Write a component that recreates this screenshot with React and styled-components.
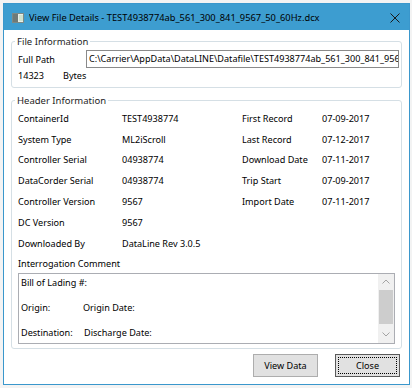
import React from "react"
import styled, { createGlobalStyle } from "styled-components"

const GlobalStyle = createGlobalStyle`
  html, body {
    margin: 0;
    padding: 0;
    background: #f3f3f3;
  }
  body {
    font-family: "Noto Sans", "Open Sans", sans-serif;
    font-size: 9.1px;
    color: #000;
  }
`

const headerLeft = [
  ["ContainerId", "TEST4938774"],
  ["System Type", "ML2iScroll"],
  ["Controller Serial", "04938774"],
  ["DataCorder Serial", "04938774"],
  ["Controller Version", "9567"],
  ["DC Version", "9567"],
  ["Downloaded By", "DataLine Rev 3.0.5"],
]

const headerRight = [
  ["First Record", "07-09-2017"],
  ["Last Record", "07-12-2017"],
  ["Download Date", "07-11-2017"],
  ["Trip Start", "07-09-2017"],
  ["Import Date", "07-11-2017"],
]

function AppIcon() {
  return (
    <IconWrap>
      <svg width="12" height="10" viewBox="0 0 12 10">
        <rect x="0.5" y="0.5" width="11" height="9" fill="#e9eee9" stroke="#7d8a86" />
        <rect x="1" y="1" width="5" height="8" fill="#6f7a77" />
        <rect x="7" y="2" width="4" height="6" fill="#cfe3cf" />
      </svg>
    </IconWrap>
  )
}

function CloseGlyph() {
  return (
    <svg width="10" height="10" viewBox="0 0 10 10">
      <path d="M0.5 0.5 L9.5 9.5 M9.5 0.5 L0.5 9.5" stroke="#1a1a1a" strokeWidth="1" fill="none" />
    </svg>
  )
}

function Arrow({ up }) {
  return (
    <svg width="8" height="5" viewBox="0 0 8 5">
      <path d={up ? "M0.5 4.5 L4 1 L7.5 4.5" : "M0.5 0.5 L4 4 L7.5 0.5"} stroke="#a3a3a3" fill="none" />
    </svg>
  )
}

export default function App() {
  return (
    <>
      <GlobalStyle />
      <Window>
        <TitleBar>
          <AppIcon />
          <Title>View File Details - TEST4938774ab_561_300_841_9567_50_60Hz.dcx</Title>
          <CloseBox><CloseGlyph /></CloseBox>
        </TitleBar>
        <Body>
          <GroupBox>
            <Legend>File Information</Legend>
            <PathRow>
              <PathLabel>Full Path</PathLabel>
              <PathBox>C:\Carrier\AppData\DataLINE\Datafile\TEST4938774ab_561_300_841_9567_50_60Hz.dcx</PathBox>
            </PathRow>
            <BytesRow>
              <BytesValue>14323</BytesValue>
              <span>Bytes</span>
            </BytesRow>
          </GroupBox>

          <GroupBox $gap>
            <Legend>Header Information</Legend>
            <InfoGrid>
              {headerLeft.map(([label, value], i) => (
                <React.Fragment key={label}>
                  <Cell>{label}</Cell>
                  <Cell>{value}</Cell>
                  <Cell>{headerRight[i] ? headerRight[i][0] : ""}</Cell>
                  <Cell>{headerRight[i] ? headerRight[i][1] : ""}</Cell>
                </React.Fragment>
              ))}
            </InfoGrid>
            <CommentLabel>Interrogation Comment</CommentLabel>
            <CommentBox>
              <CommentText>
                <Line>Bill of Lading #:</Line>
                <Line><Tab $w={62}>Origin:</Tab>Origin Date:</Line>
                <Line><Tab $w={63}>Destination:</Tab>Discharge Date:</Line>
              </CommentText>
              <ScrollBar>
                <ScrollButton><Arrow up /></ScrollButton>
                <Track><Thumb /></Track>
                <ScrollButton><Arrow /></ScrollButton>
              </ScrollBar>
            </CommentBox>
          </GroupBox>

          <Buttons>
            <Button>View Data</Button>
            <Button $default><Focus>Close</Focus></Button>
          </Buttons>
        </Body>
      </Window>
    </>
  )
}

const Window = styled.div`
  margin: 3px 0 0 3px;
  width: 405px;
  height: 380px;
  border: 1px solid #3a97cc;
  background: #ffffff;
  display: flex;
  flex-direction: column;
`

const TitleBar = styled.div`
  height: 26px;
  background: #3d9dd0;
  display: flex;
  align-items: center;
  padding: 0 9px 0 8px;
  gap: 5px;
`

const IconWrap = styled.div`
  flex-shrink: 0;
  display: flex;
  padding-top: 1px;
`

const Title = styled.div`
  flex: 1;
  font-size: 9.3px;
  color: #000;
  white-space: nowrap;
  overflow: hidden;
`

const CloseBox = styled.div`
  flex-shrink: 0;
  display: flex;
  align-items: center;
  padding-top: 1px;
`

const Body = styled.div`
  flex: 1;
  display: flex;
  flex-direction: column;
  padding: 4px 7px 0 7px;
`

const GroupBox = styled.fieldset`
  margin: ${p => (p.$gap ? "5px" : "0")} 0 0 0;
  padding: 0 6px ${p => (p.$gap ? "4px" : "3px")} 6px;
  border: 1px solid #d5dfe5;
  border-radius: 3px;
  min-width: 0;
`

const Legend = styled.legend`
  padding: 0 2px;
  margin-left: -3px;
  line-height: 15px;
  font-size: 9.5px;
  color: #1e1e1e;
`

const PathRow = styled.div`
  display: flex;
  align-items: center;
  height: 18px;
  margin: 1px -4px 0 0;
`

const PathLabel = styled.div`
  width: 68px;
  flex-shrink: 0;
`

const PathBox = styled.div`
  flex: 1;
  height: 18px;
  box-sizing: border-box;
  border: 1px solid #8a8a8a;
  padding: 0 2px;
  line-height: 16px;
  white-space: nowrap;
  overflow: hidden;
`

const BytesRow = styled.div`
  display: flex;
  height: 16px;
  line-height: 16px;
`

const BytesValue = styled.span`
  width: 45px;
`

const InfoGrid = styled.div`
  display: grid;
  grid-template-columns: 104px 120px 80px 1fr;
  grid-auto-rows: 20.8px;
  align-items: center;
`

const Cell = styled.div`
  white-space: nowrap;
`

const CommentLabel = styled.div`
  height: 19px;
  line-height: 20px;
`

const CommentBox = styled.div`
  height: 71px;
  box-sizing: border-box;
  border: 1px solid #abadb3;
  display: flex;
`

const CommentText = styled.div`
  flex: 1;
  padding: 1px 2px 0 2px;
`

const Line = styled.div`
  height: 16px;
  line-height: 16px;
  margin-bottom: 9px;
  white-space: nowrap;
`

const Tab = styled.span`
  display: inline-block;
  width: ${p => p.$w}px;
`

const ScrollBar = styled.div`
  width: 16px;
  background: #f0f0f0;
  display: flex;
  flex-direction: column;
`

const ScrollButton = styled.div`
  height: 16px;
  display: flex;
  align-items: center;
  justify-content: center;
`

const Track = styled.div`
  flex: 1;
  padding: 0 1px;
`

const Thumb = styled.div`
  height: 34px;
  background: #cdcdcd;
`

const Buttons = styled.div`
  display: flex;
  justify-content: flex-end;
  gap: 17px;
  margin-top: 5px;
  padding-right: 2px;
`

const Button = styled.div`
  width: 65px;
  height: 23px;
  box-sizing: border-box;
  background: #e1e1e1;
  border: 1px solid ${p => (p.$default ? "#5a5a5a" : "#adadad")};
  display: flex;
  align-items: center;
  justify-content: center;
  padding: ${p => (p.$default ? "2px" : "0")};
`

const Focus = styled.div`
  flex: 1;
  align-self: stretch;
  border: 1px dotted #000;
  display: flex;
  align-items: center;
  justify-content: center;
`
